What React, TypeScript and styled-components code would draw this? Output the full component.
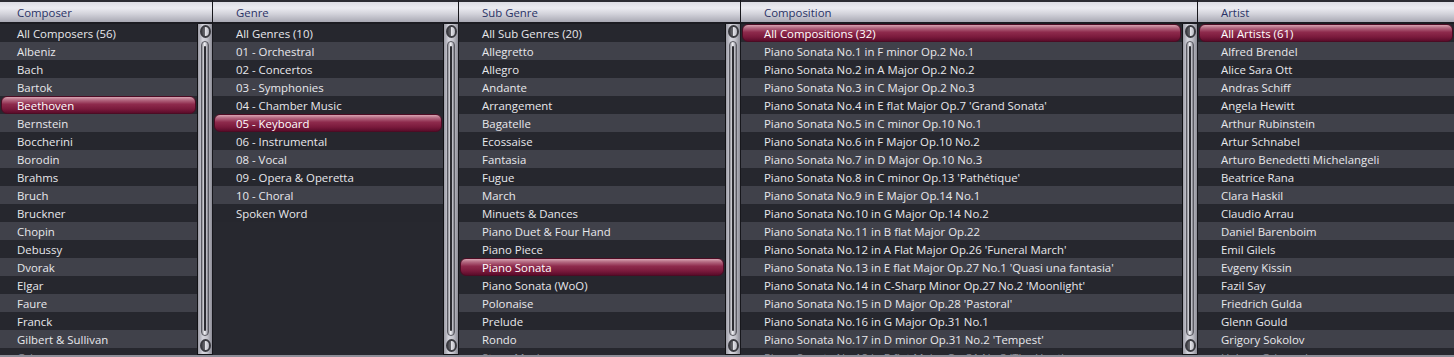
import React from "react";
import styled, { createGlobalStyle } from "styled-components";

const GlobalStyle = createGlobalStyle`
  html, body { margin: 0; padding: 0; background: #27282f; }
  body { font-family: "Segoe UI", "Open Sans", "Noto Sans", sans-serif; }
  * { box-sizing: border-box; }
`;

const Browser = styled.div`
  display: flex;
  width: 1454px;
  height: 357px;
  overflow: hidden;
  background: #27282f;
  border-bottom: 2px solid #8e8e98;
`;

const Column = styled.div<{ $width?: number }>`
  display: flex;
  flex-direction: column;
  flex: ${(p) => (p.$width ? `0 0 ${p.$width}px` : "1 1 auto")};
  min-width: 0;
  border-right: ${(p) => (p.$width ? "1px solid #17171c" : "none")};
`;

const Header = styled.div<{ $indent: number }>`
  height: 24px;
  flex: 0 0 24px;
  display: flex;
  align-items: center;
  padding-left: ${(p) => p.$indent}px;
  border-top: 2px solid #2b2b33;
  border-bottom: 2px solid #1c1c22;
  background: linear-gradient(
    to bottom,
    #dcdce4 0%,
    #ebebf1 30%,
    #d2d2da 60%,
    #a9a9b4 100%
  );
  color: #2a3366;
  font-size: 11.4px;
  white-space: nowrap;
`;

const Body = styled.div`
  flex: 1;
  display: flex;
  min-height: 0;
  overflow: hidden;
`;

const List = styled.div`
  flex: 1;
  display: flex;
  flex-direction: column;
  min-width: 0;
  overflow: hidden;
`;

const Row = styled.div<{ $indent: number; $alt: boolean; $selected: boolean; $faded: boolean }>`
  flex: 0 0 18px;
  height: 18px;
  display: flex;
  align-items: center;
  white-space: nowrap;
  overflow: hidden;
  font-size: 11.4px;
  color: ${(p) => (p.$faded ? "#8a8a92" : "#e8e8ec")};
  padding-left: ${(p) => (p.$selected ? p.$indent - 2 : p.$indent)}px;
  background: ${(p) => (p.$alt ? "#40414a" : "#26272e")};
  ${(p) =>
    p.$selected &&
    `
    margin: 0 1px 0 1px;
    border: 1px solid #4c0c24;
    border-radius: 6px;
    color: #ffffff;
    background: linear-gradient(
      to bottom,
      #d8a4b2 0%,
      #b46a82 18%,
      #8e2a4c 45%,
      #7a1a3c 75%,
      #5c0c2a 100%
    );
  `}
`;

const ScrollTrack = styled.div`
  flex: 0 0 15px;
  width: 15px;
  display: flex;
  flex-direction: column;
  align-items: center;
  padding: 1px 0 2px;
  gap: 2px;
  border-left: 1px solid #111114;
  border-bottom: 1px solid #111114;
  background: linear-gradient(to right, #9c9ca6 0%, #d6d6de 35%, #c4c4cc 65%, #8e8e98 100%);
`;

const Knob = styled.div`
  flex: 0 0 13px;
  width: 11px;
  height: 13px;
  border-radius: 50%;
  border: 2px solid #3a3a40;
  background: linear-gradient(to right, #4a4a50 0%, #6a6a70 45%, #e4e4ea 46%, #b8b8c0 100%);
`;

const Slot = styled.div`
  position: relative;
  flex: 1;
  width: 8px;
  margin: 1px 0;
  border-radius: 4px;
  border: 1px solid #5a5a62;
  background: linear-gradient(to right, #8c8c94 0%, #eeeef2 40%, #c8c8d0 70%, #7c7c84 100%);

  &::after {
    content: "";
    position: absolute;
    top: 4px;
    bottom: 4px;
    left: 50%;
    width: 2px;
    margin-left: -1px;
    background: #2c2c32;
    border-radius: 1px;
  }
`;

type ColumnSpec = {
  title: string;
  width?: number;
  indent: number;
  items: string[];
  selected: number;
  scroll: boolean;
};

const columns: ColumnSpec[] = [
  {
    title: "Composer",
    width: 213,
    indent: 17,
    selected: 4,
    scroll: true,
    items: [
      "All Composers (56)",
      "Albeniz",
      "Bach",
      "Bartok",
      "Beethoven",
      "Bernstein",
      "Boccherini",
      "Borodin",
      "Brahms",
      "Bruch",
      "Bruckner",
      "Chopin",
      "Debussy",
      "Dvorak",
      "Elgar",
      "Faure",
      "Franck",
      "Gilbert & Sullivan",
      "Grieg",
    ],
  },
  {
    title: "Genre",
    width: 246,
    indent: 23,
    selected: 5,
    scroll: true,
    items: [
      "All Genres (10)",
      "01 - Orchestral",
      "02 - Concertos",
      "03 - Symphonies",
      "04 - Chamber Music",
      "05 - Keyboard",
      "06 - Instrumental",
      "08 - Vocal",
      "09 - Opera & Operetta",
      "10 - Choral",
      "Spoken Word",
    ],
  },
  {
    title: "Sub Genre",
    width: 282,
    indent: 23,
    selected: 13,
    scroll: true,
    items: [
      "All Sub Genres (20)",
      "Allegretto",
      "Allegro",
      "Andante",
      "Arrangement",
      "Bagatelle",
      "Ecossaise",
      "Fantasia",
      "Fugue",
      "March",
      "Minuets & Dances",
      "Piano Duet & Four Hand",
      "Piano Piece",
      "Piano Sonata",
      "Piano Sonata (WoO)",
      "Polonaise",
      "Prelude",
      "Rondo",
      "Stage Music",
    ],
  },
  {
    title: "Composition",
    width: 457,
    indent: 23,
    selected: 0,
    scroll: true,
    items: [
      "All Compositions (32)",
      "Piano Sonata No.1 in F minor Op.2 No.1",
      "Piano Sonata No.2 in A Major Op.2 No.2",
      "Piano Sonata No.3 in C Major Op.2 No.3",
      "Piano Sonata No.4 in E flat Major Op.7 'Grand Sonata'",
      "Piano Sonata No.5 in C minor Op.10 No.1",
      "Piano Sonata No.6 in F Major Op.10 No.2",
      "Piano Sonata No.7 in D Major Op.10 No.3",
      "Piano Sonata No.8 in C minor Op.13 'Pathétique'",
      "Piano Sonata No.9 in E Major Op.14 No.1",
      "Piano Sonata No.10 in G Major Op.14 No.2",
      "Piano Sonata No.11 in B flat Major Op.22",
      "Piano Sonata No.12 in A Flat Major Op.26 'Funeral March'",
      "Piano Sonata No.13 in E flat Major Op.27 No.1 'Quasi una fantasia'",
      "Piano Sonata No.14 in C-Sharp Minor Op.27 No.2 'Moonlight'",
      "Piano Sonata No.15 in D Major Op.28 'Pastoral'",
      "Piano Sonata No.16 in G Major Op.31 No.1",
      "Piano Sonata No.17 in D minor Op.31 No.2 'Tempest'",
      "Piano Sonata No.18 in E flat Major Op.31 No.3 'The Hunt'",
    ],
  },
  {
    title: "Artist",
    indent: 23,
    selected: 0,
    scroll: false,
    items: [
      "All Artists (61)",
      "Alfred Brendel",
      "Alice Sara Ott",
      "Andras Schiff",
      "Angela Hewitt",
      "Arthur Rubinstein",
      "Artur Schnabel",
      "Arturo Benedetti Michelangeli",
      "Beatrice Rana",
      "Clara Haskil",
      "Claudio Arrau",
      "Daniel Barenboim",
      "Emil Gilels",
      "Evgeny Kissin",
      "Fazil Say",
      "Friedrich Gulda",
      "Glenn Gould",
      "Grigory Sokolov",
      "Helene Grimaud",
    ],
  },
];

const ScrollBar: React.FC = () => (
  <ScrollTrack>
    <Knob />
    <Slot />
    <Knob />
  </ScrollTrack>
);

export default function App() {
  return (
    <>
      <GlobalStyle />
      <Browser>
        {columns.map((col) => (
          <Column key={col.title} $width={col.width}>
            <Header $indent={col.indent}>{col.title}</Header>
            <Body>
              <List>
                {col.items.map((item, i) => (
                  <Row
                    key={item}
                    $indent={col.indent}
                    $alt={i % 2 === 1}
                    $selected={i === col.selected}
                    $faded={i >= 18}
                  >
                    {item}
                  </Row>
                ))}
              </List>
              {col.scroll && <ScrollBar />}
            </Body>
          </Column>
        ))}
      </Browser>
    </>
  );
}
